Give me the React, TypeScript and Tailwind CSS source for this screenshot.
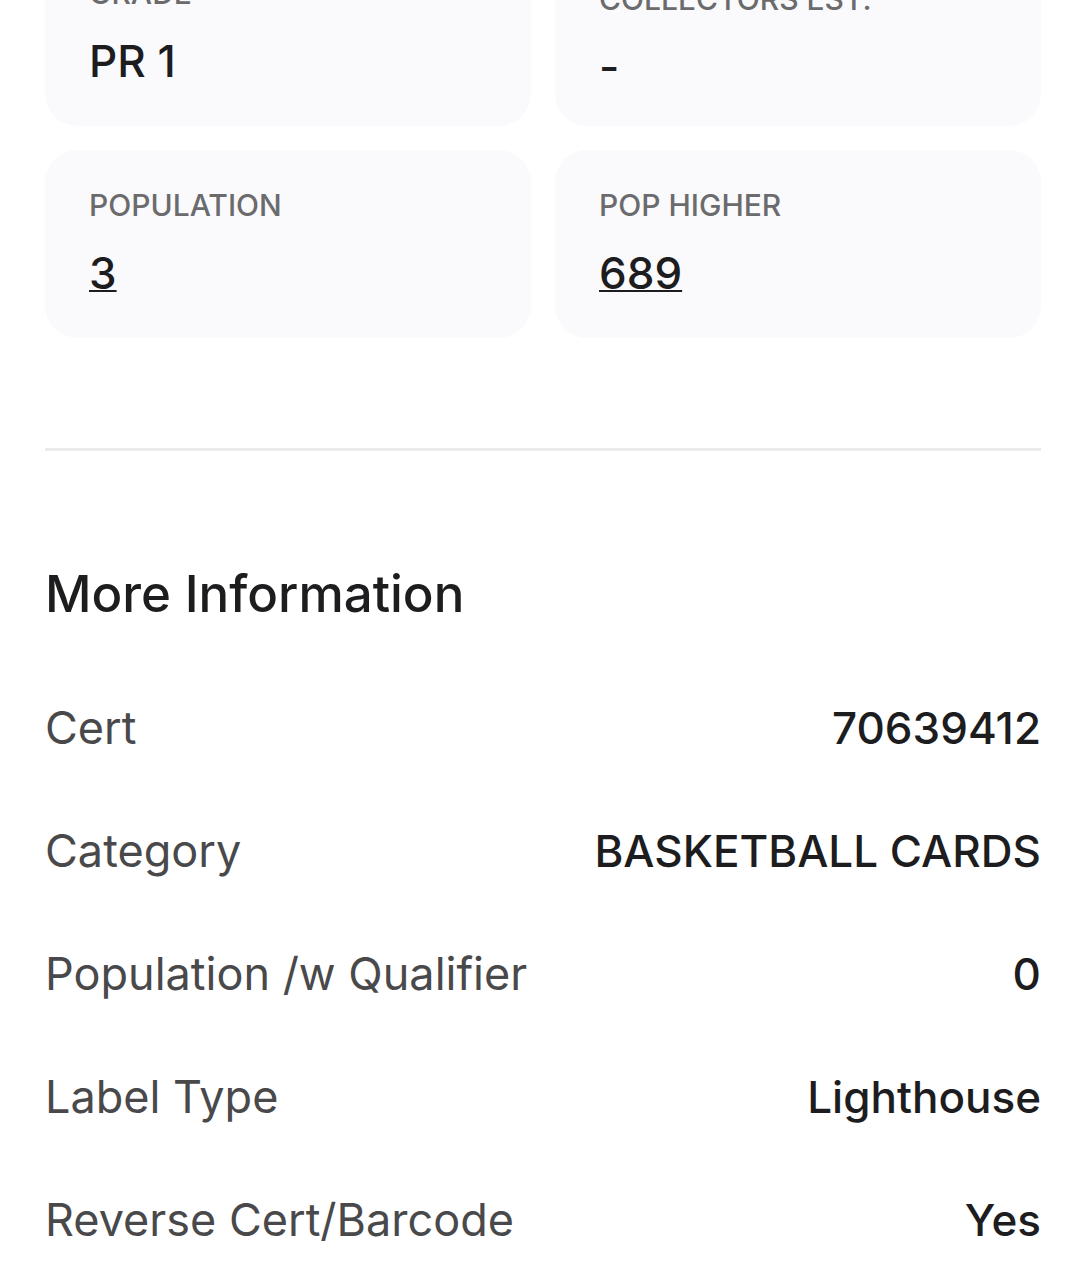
type Stat = {
  label: string;
  value: string;
  href?: string;
  padding: string;
};

const stats: Stat[] = [
  { label: "GRADE", value: "PR 1", padding: "pt-[35px]" },
  { label: "COLLECTORS EST.", value: "-", padding: "pt-[41px]" },
  { label: "POPULATION", value: "3", href: "#population", padding: "pt-[35px]" },
  { label: "POP HIGHER", value: "689", href: "#pop-higher", padding: "pt-[35px]" },
];

const details = [
  { label: "Cert", value: "70639412" },
  { label: "Category", value: "BASKETBALL CARDS" },
  { label: "Population /w Qualifier", value: "0" },
  { label: "Label Type", value: "Lighthouse" },
  { label: "Reverse Cert/Barcode", value: "Yes" },
];

function StatCard({ label, value, href, padding }: Stat) {
  return (
    <div className={`flex min-h-[188px] flex-col gap-2.5 rounded-[32px] bg-[#fafafc] px-11 ${padding}`}>
      <dt className="text-[30px] leading-10 font-medium text-[#6b6b6d]">{label}</dt>
      <dd className="text-[44px] leading-[76px] font-medium">
        {href ? (
          <a href={href} className="underline decoration-2 underline-offset-1 [text-decoration-skip-ink:none]">
            {value}
          </a>
        ) : (
          value
        )}
      </dd>
    </div>
  );
}

export default function App() {
  return (
    <main className="min-h-screen overflow-hidden bg-white px-[45px] font-['Inter',sans-serif] text-[#1d1d1f]">
      <dl className="-mt-[62px] grid grid-cols-2 gap-6">
        {stats.map((stat) => (
          <StatCard key={stat.label} {...stat} />
        ))}
      </dl>

      <hr className="mt-[110px] border-t-3 border-[#ebebec]" />

      <section>
        <h2 className="mt-[111px] text-[51px] leading-[64px] font-medium">More Information</h2>
        <dl className="mt-[70px] flex flex-col gap-[59px]">
          {details.map(({ label, value }) => (
            <div key={label} className="flex items-center justify-between leading-[64px]">
              <dt className="text-[45px] text-[#49494b]">{label}</dt>
              <dd className="text-right text-[44px] font-medium">{value}</dd>
            </div>
          ))}
        </dl>
      </section>
    </main>
  );
}
